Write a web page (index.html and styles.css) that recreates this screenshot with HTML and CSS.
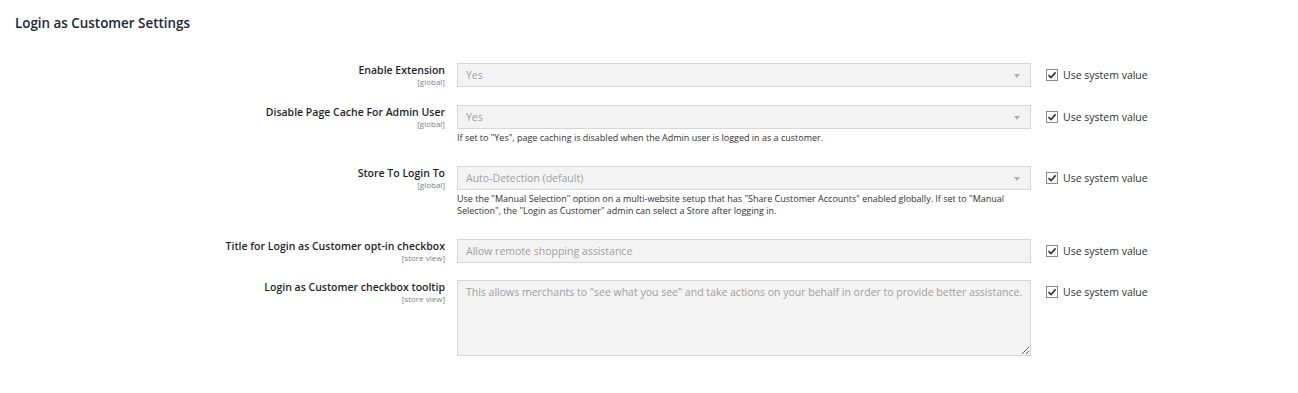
FILE: index.html
```html
<!DOCTYPE html>
<html lang="en">

<head>
  <meta charset="UTF-8">
  <meta name="viewport" content="width=device-width, initial-scale=1.0">
  <title>Login as Customer Settings</title>
  <link rel="stylesheet" href="styles.css">
</head>

<body>
  <section class="config-section">
    <h2 class="section-title">Login as Customer Settings</h2>
    <div class="config-rows">
      <div class="config-row">
        <div class="label-col">
          <span class="label">Enable Extension</span>
          <span class="scope">[global]</span>
        </div>
        <div class="value-col">
          <div class="select">Yes<span class="arrow"></span></div>
        </div>
        <label class="system">
          <span class="check"><svg width="10" height="10" viewBox="0 0 10 10"><path d="M1.5 5.2 L4 7.6 L8.6 2.4" fill="none" stroke="#333" stroke-width="1.6"/></svg></span>
          Use system value
        </label>
      </div>

      <div class="config-row">
        <div class="label-col">
          <span class="label">Disable Page Cache For Admin User</span>
          <span class="scope">[global]</span>
        </div>
        <div class="value-col">
          <div class="select">Yes<span class="arrow"></span></div>
          <p class="note">If set to "Yes", page caching is disabled when the Admin user is logged in as a customer.</p>
        </div>
        <label class="system">
          <span class="check"><svg width="10" height="10" viewBox="0 0 10 10"><path d="M1.5 5.2 L4 7.6 L8.6 2.4" fill="none" stroke="#333" stroke-width="1.6"/></svg></span>
          Use system value
        </label>
      </div>

      <div class="config-row">
        <div class="label-col">
          <span class="label">Store To Login To</span>
          <span class="scope">[global]</span>
        </div>
        <div class="value-col">
          <div class="select">Auto-Detection (default)<span class="arrow"></span></div>
          <p class="note">Use the "Manual Selection" option on a multi-website setup that has "Share Customer Accounts" enabled globally. If set to "Manual Selection", the "Login as Customer" admin can select a Store after logging in.</p>
        </div>
        <label class="system">
          <span class="check"><svg width="10" height="10" viewBox="0 0 10 10"><path d="M1.5 5.2 L4 7.6 L8.6 2.4" fill="none" stroke="#333" stroke-width="1.6"/></svg></span>
          Use system value
        </label>
      </div>

      <div class="config-row">
        <div class="label-col">
          <span class="label">Title for Login as Customer opt-in checkbox</span>
          <span class="scope">[store view]</span>
        </div>
        <div class="value-col">
          <input class="text-input" type="text" value="Allow remote shopping assistance" disabled>
        </div>
        <label class="system">
          <span class="check"><svg width="10" height="10" viewBox="0 0 10 10"><path d="M1.5 5.2 L4 7.6 L8.6 2.4" fill="none" stroke="#333" stroke-width="1.6"/></svg></span>
          Use system value
        </label>
      </div>

      <div class="config-row last">
        <div class="label-col">
          <span class="label">Login as Customer checkbox tooltip</span>
          <span class="scope">[store view]</span>
        </div>
        <div class="value-col">
          <textarea class="text-area" disabled>This allows merchants to "see what you see" and take actions on your behalf in order to provide better assistance.</textarea>
        </div>
        <label class="system">
          <span class="check"><svg width="10" height="10" viewBox="0 0 10 10"><path d="M1.5 5.2 L4 7.6 L8.6 2.4" fill="none" stroke="#333" stroke-width="1.6"/></svg></span>
          Use system value
        </label>
      </div>
    </div>
  </section>
</body>

</html>
```

FILE: styles.css
```css
body {
  font-family: "Open Sans", Arial, sans-serif;
  margin: 0;
  padding: 0;
  background-color: #fff;
  color: #303030;
}

.config-section {
  padding: 14px 15px 0 15px;
}

.section-title {
  font-size: 13.4px;
  font-weight: 600;
  color: #222733;
  margin: 0;
  line-height: 18px;
}

.config-rows {
  margin-top: 31px;
}

.config-row {
  display: grid;
  grid-template-columns: 430px 574px auto;
  column-gap: 12px;
  padding-bottom: 18px;
}

.config-row.last {
  margin-top: -1px;
}

.label-col {
  display: flex;
  flex-direction: column;
  align-items: flex-end;
}

.label {
  font-size: 10.5px;
  font-weight: 600;
  line-height: 14px;
  color: #1f1f1f;
}

.scope {
  font-size: 8px;
  line-height: 9px;
  color: #808080;
}

.select,
.text-input,
.text-area {
  box-sizing: border-box;
  width: 574px;
  background-color: #f3f3f3;
  border: 1px solid #d6d6d6;
  color: #a0a0a0;
  font-family: "Open Sans", Arial, sans-serif;
  font-size: 10.5px;
  margin: 0;
}

.select {
  height: 24px;
  line-height: 23px;
  padding: 0 8px;
  position: relative;
}

.arrow {
  position: absolute;
  right: 10px;
  top: 10px;
  width: 0;
  height: 0;
  border-left: 3px solid transparent;
  border-right: 3px solid transparent;
  border-top: 4px solid #b0b0b0;
}

.text-input {
  display: block;
  height: 24px;
  padding: 0 8px;
}

.text-area {
  display: block;
  height: 76px;
  padding: 3px 7px 4px 8px;
  line-height: 16px;
  resize: both;
}

.note {
  margin: 3px 0 4px 0;
  font-size: 9px;
  line-height: 12px;
  color: #303030;
}

.system {
  display: flex;
  align-items: center;
  gap: 5px;
  height: 24px;
  margin-left: 3px;
  font-size: 10.5px;
  color: #303030;
}

.check {
  box-sizing: border-box;
  width: 12px;
  height: 12px;
  border: 1px solid #8a8a8a;
  background-color: #fff;
  display: flex;
  align-items: center;
  justify-content: center;
}
```
